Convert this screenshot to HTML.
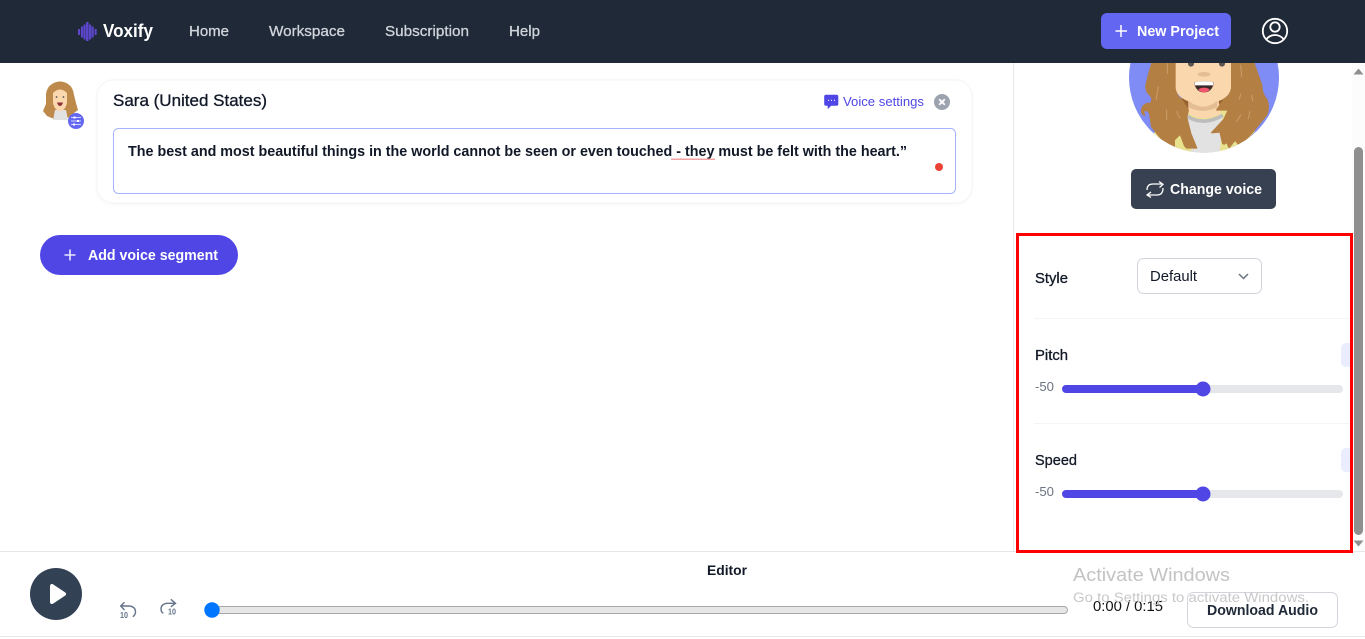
<!DOCTYPE html>
<html lang="en"><head><meta charset="utf-8"><title>Voxify</title>
<style>
html,body{margin:0;padding:0;background:#fff;width:1365px;height:639px;overflow:hidden}
svg{display:block}
text{font-family:"Liberation Sans",Arial,sans-serif}
.b{font-weight:700}
.m{stroke-width:.3}
</style></head><body>
<svg width="1365" height="639" viewBox="0 0 1365 639" xmlns="http://www.w3.org/2000/svg">
<defs>
<clipPath id="c"><circle cx="252" cy="53" r="225"/></clipPath>
<filter id="s" x="-5%" y="-10%" width="110%" height="120%"><feDropShadow dx="0" dy="1" stdDeviation="1.500" flood-color="#000" flood-opacity=".035"/></filter>
</defs>
<rect width="1365" height="639" fill="#fff"/>

<!-- big avatar -->
<g transform="translate(1120,60) scale(.33333)">
<g clip-path="url(#c)">
<rect x="0" y="-200" width="500" height="500" fill="#7f8cf5"/>
<rect x="185" y="90" width="135" height="62" fill="#986331"/>
<path d="M95 225L180 150H330L405 215L340 280H160Z" fill="#e8e28e"/>
<path d="M198 168Q250 198 308 166L300 280H215Z" fill="#e2e2e2"/>
<path d="M200 168Q250 200 308 166" fill="none" stroke="#bdbdbd" stroke-width="11"/>
<path d="M205 105V160Q250 190 303 160L292 105Z" fill="#fbd7ae"/>
<path d="M205 122Q250 158 292 122V142Q250 163 205 142Z" fill="#e5bd93"/>
<path d="M165 -10H335V85Q320 130 250 130Q180 130 165 85Z" fill="#fbd7ae"/>
<g fill="#b47f42" stroke="#b47f42" stroke-width="4" stroke-linejoin="round">
<path d="M165 -10V85Q170 108 182 116L205 150L200 172L212 220L230 264L165 264L125 238L95 200L90 168Q88 148 72 152Q70 160 74 166Q62 160 66 145Q72 130 90 130Q102 120 90 105Q76 95 78 75L88 35L102 -10Z"/>
<path d="M335 -10V85Q330 108 312 118L290 150H325L312 178L275 218L300 216L308 250L328 262L345 240L360 258L395 220L440 165Q450 140 440 118Q425 100 425 75L395 -10Z"/>
</g>
<path d="M165 240L180 226L192 258L204 272L165 266Z" fill="#e8e28e"/>
<path d="M300 262L320 250L326 268L300 276Z" fill="#e8e28e"/>
<circle cx="213" cy="11" r="9" fill="#5a5550"/><circle cx="306" cy="11" r="9" fill="#5a5550"/>
<ellipse cx="252" cy="43" rx="19" ry="7" fill="#e5bd93"/>
<path d="M222 67Q252 60 282 67Q276 97 252 97Q228 97 222 67Z" fill="#3b2a2a"/>
<path d="M223 67Q252 60 281 67L279 76H225Z" fill="#fff"/>
<path d="M234 88Q252 78 270 88Q262 97 252 97Q242 97 234 88Z" fill="#f4576d"/>
<g stroke="#cfa678" stroke-width="3" stroke-linecap="round" fill="none" opacity=".8">
<path d="M115 80L108 120M142 10V40M140 150V178M170 155L180 175M362 15L365 50M395 105L398 122M362 102L358 118M362 165L350 185M390 155L385 175"/>
</g>
</g>
</g>

<!-- small avatar -->
<g>
<path d="M52 84Q60 79 68 84Q73 87 74 95L76 103L78 110L74 113L70 117L64 119H54L47 116L43 111L46 104L46 94Q47 87 52 84Z" fill="#be8a4b"/>
<path d="M55 110H66L68 120H53Z" fill="#e2e2e2"/>
<path d="M53 93Q60 86 67 93V103Q65 111 60 111Q55 111 53 103Z" fill="#fbd7ae"/>
<circle cx="56.500" cy="97" r=".9" fill="#555"/><circle cx="63.500" cy="97" r=".9" fill="#555"/>
<path d="M57 102.500H63Q62 106 60 106Q58 106 57 102.500Z" fill="#8c2f39"/>
</g>
<circle cx="76" cy="121" r="8" fill="#6366f1"/>
<path d="M71 117.500H81M71 121H81M71 124.500H81" stroke="#cfd2ff" stroke-width="1"/>
<path d="M74.500 116.500v2M78 120v2M74 123.500v2" stroke="#fff" stroke-width="2"/>

<!-- card -->
<rect x="97" y="80" width="875" height="123" rx="16" fill="#fff" stroke="#f3f4f6" filter="url(#s)"/>
<text x="113" y="106" font-size="16.500" fill="#111827" stroke="#111827" class="m" textLength="154" lengthAdjust="spacingAndGlyphs">Sara (United States)</text>
<path d="M826 95H836.500Q838 95 838 96.500V104Q838 105.500 836.500 105.500H831L828 108.500V105.500H826Q824.500 105.500 824.500 104V96.500Q824.500 95 826 95Z" fill="#4f46e5" stroke="#4f46e5" stroke-width=".6"/>
<path d="M828 100.300h1M831 100.300h1M834 100.300h1" stroke="#fff" stroke-width="1.100"/>
<text x="843" y="106" font-size="13" fill="#4f46e5" textLength="81" lengthAdjust="spacingAndGlyphs">Voice settings</text>
<circle cx="942" cy="102" r="8" fill="#9ca3af"/>
<path d="M939.200 99.200L944.800 104.800M944.800 99.200L939.200 104.800" stroke="#fff" stroke-width="1.800"/>
<rect x="113.500" y="128.500" width="842" height="65" rx="5" fill="#fff" stroke="#a5b4fc"/>
<text x="128" y="156" font-size="14.800" class="b" fill="#111827" textLength="779" lengthAdjust="spacingAndGlyphs">The best and most beautiful things in the world cannot be seen or even touched - they must be felt with the heart.”</text>
<rect x="671" y="158.500" width="44" height="1.500" fill="#f3a3a3"/>
<circle cx="939" cy="167" r="4" fill="#ea4335"/>

<!-- add segment -->
<rect x="40" y="235" width="198" height="40" rx="20" fill="#4f46e5"/>
<path d="M64.500 255H75.500M70 249.500V260.500" stroke="#e8e7fd" stroke-width="1.600"/>
<text x="88" y="260" font-size="15" class="b" fill="#fff" textLength="130" lengthAdjust="spacingAndGlyphs">Add voice segment</text>

<!-- right panel -->
<rect x="1013" y="63" width="1" height="488" fill="#e5e7eb"/>
<rect x="1131" y="169" width="145" height="40" rx="5" fill="#374151"/>
<path d="M1147 190Q1147 184 1153 184H1162M1159 181.500L1163 184.300L1159.500 187.500M1163 188Q1163 195 1157 195H1148M1151 192L1147 195L1151 197.500" fill="none" stroke="#fff" stroke-width="1.300"/>
<text x="1170" y="194" font-size="15" class="b" fill="#fff" textLength="92" lengthAdjust="spacingAndGlyphs">Change voice</text>

<text x="1035" y="283" font-size="14.500" fill="#111827" stroke="#111827" class="m" textLength="33" lengthAdjust="spacingAndGlyphs">Style</text>
<rect x="1137.500" y="258.500" width="124" height="35" rx="6" fill="#fff" stroke="#d1d5db"/>
<text x="1150" y="281" font-size="14.500" fill="#111827" textLength="47" lengthAdjust="spacingAndGlyphs">Default</text>
<path d="M1239 274L1243.500 278.500L1248 274" fill="none" stroke="#6b7280" stroke-width="1.500"/>
<rect x="1034" y="318" width="318" height="1" fill="#f3f4f6"/>

<text x="1035" y="360" font-size="14.500" fill="#111827" stroke="#111827" class="m" textLength="33" lengthAdjust="spacingAndGlyphs">Pitch</text>
<rect x="1341" y="343" width="20" height="24" rx="5" fill="#e9edfd"/>
<text x="1035" y="391" font-size="12.500" fill="#6b7280" textLength="19" lengthAdjust="spacingAndGlyphs">-50</text>
<rect x="1062" y="385" width="281" height="8" rx="4" fill="#e5e7eb"/>
<rect x="1062" y="385" width="141" height="8" rx="4" fill="#4f46e5"/>
<circle cx="1203" cy="389" r="7.500" fill="#4f46e5"/>
<rect x="1034" y="423" width="318" height="1" fill="#f3f4f6"/>

<text x="1035" y="465" font-size="14.500" fill="#111827" stroke="#111827" class="m" textLength="42" lengthAdjust="spacingAndGlyphs">Speed</text>
<rect x="1341" y="448" width="20" height="24" rx="5" fill="#e9edfd"/>
<text x="1035" y="496" font-size="12.500" fill="#6b7280" textLength="19" lengthAdjust="spacingAndGlyphs">-50</text>
<rect x="1062" y="490" width="281" height="8" rx="4" fill="#e5e7eb"/>
<rect x="1062" y="490" width="141" height="8" rx="4" fill="#4f46e5"/>
<circle cx="1203" cy="494" r="7.500" fill="#4f46e5"/>

<!-- scrollbar -->
<rect x="1352" y="63" width="13" height="488" fill="#fcfcfc"/>
<path d="M1353.500 74.500L1358.500 68.500L1363.500 74.500Z" fill="#8f8f8f"/>
<rect x="1354" y="147" width="9" height="388" rx="4.500" fill="#8f8f8f"/>
<path d="M1353.500 540.500L1358.500 546.500L1363.500 540.500Z" fill="#8f8f8f"/>

<!-- header -->
<rect width="1365" height="63" fill="#1f2937"/>
<g fill="#5b45c9">
<rect x="78" y="29" width="2.200" height="6"/><rect x="81" y="26.500" width="2.200" height="11"/><rect x="83.500" y="24.500" width="2.200" height="15"/><rect x="86" y="22" width="2.600" height="19"/><rect x="89" y="24.500" width="2.200" height="15"/><rect x="91.500" y="26.500" width="2.200" height="11"/><rect x="94.500" y="29" width="2.200" height="6"/>
</g>
<text x="103" y="37" font-size="18.500" class="b" fill="#fff" textLength="50" lengthAdjust="spacingAndGlyphs">Voxify</text>
<g font-size="15" fill="#d1d5db" stroke="#d1d5db" class="m">
<text x="189" y="36" textLength="40" lengthAdjust="spacingAndGlyphs">Home</text>
<text x="269" y="36" textLength="76" lengthAdjust="spacingAndGlyphs">Workspace</text>
<text x="385" y="36" textLength="84" lengthAdjust="spacingAndGlyphs">Subscription</text>
<text x="509" y="36" textLength="31" lengthAdjust="spacingAndGlyphs">Help</text>
</g>
<rect x="1101" y="13" width="130" height="36" rx="6" fill="#6366f1"/>
<path d="M1115.500 31H1127M1121 25V37" stroke="#fff" stroke-width="1.500"/>
<text x="1137" y="36" font-size="15" class="b" fill="#fff" textLength="82" lengthAdjust="spacingAndGlyphs">New Project</text>
<circle cx="1275" cy="31" r="12.200" fill="none" stroke="#fff" stroke-width="1.800"/>
<circle cx="1275" cy="27" r="4.700" fill="none" stroke="#fff" stroke-width="1.800"/>
<path d="M1266.500 39Q1270 35 1275 35Q1280 35 1283.500 39" fill="none" stroke="#fff" stroke-width="1.800"/>

<!-- player -->
<rect x="0" y="551" width="1365" height="1" fill="#e5e7eb"/>
<rect x="0" y="636" width="1365" height="1" fill="#e5e7eb"/>
<circle cx="56" cy="594" r="26" fill="#334155"/>
<path d="M52 586V602L64 594Z" fill="#fff" stroke="#fff" stroke-width="4" stroke-linejoin="round"/>
<path d="M121 606H129Q135.500 606.500 135.500 612Q135.500 615 132.700 616.700M124.500 602.300L120.700 606L124.500 610" fill="none" stroke="#64748b" stroke-width="1.400"/>
<text x="120" y="618" font-size="8.300" class="b" fill="#64748b" textLength="8" lengthAdjust="spacingAndGlyphs">10</text>
<path d="M175 603.300H167Q161 604 161 609Q161 612 163.300 613.300M170.800 599.300L175.500 603.300L170.800 606.800" fill="none" stroke="#64748b" stroke-width="1.400"/>
<text x="168" y="614.700" font-size="8.300" class="b" fill="#64748b" textLength="8" lengthAdjust="spacingAndGlyphs">10</text>
<rect x="206.500" y="606.500" width="861" height="7" rx="3.500" fill="#e6e6e6" stroke="#a8a8a8"/>
<circle cx="212" cy="610" r="7.700" fill="#0075ff"/>
<text x="707" y="575" font-size="13.500" class="b" fill="#111827" textLength="40" lengthAdjust="spacingAndGlyphs">Editor</text>
<text x="1093" y="611" font-size="14.500" fill="#111" textLength="70" lengthAdjust="spacingAndGlyphs">0:00 / 0:15</text>
<rect x="1187.500" y="592.500" width="150" height="35" rx="6" fill="#fff" stroke="#d1d5db"/>
<text x="1207" y="615" font-size="14.500" class="b" fill="#1f2937" textLength="111" lengthAdjust="spacingAndGlyphs">Download Audio</text>

<!-- red rect -->
<rect x="1017.500" y="234.500" width="334" height="317" fill="none" stroke="#ff0000" stroke-width="3" shape-rendering="crispEdges"/>

<!-- watermark -->
<text x="1073" y="581" font-size="18.500" fill="#c3c3c3" textLength="157" lengthAdjust="spacingAndGlyphs">Activate Windows</text>
<text x="1073" y="602" font-size="13.500" fill="#c8c8c8" textLength="236" lengthAdjust="spacingAndGlyphs">Go to Settings to activate Windows.</text>
</svg>
</body></html>
